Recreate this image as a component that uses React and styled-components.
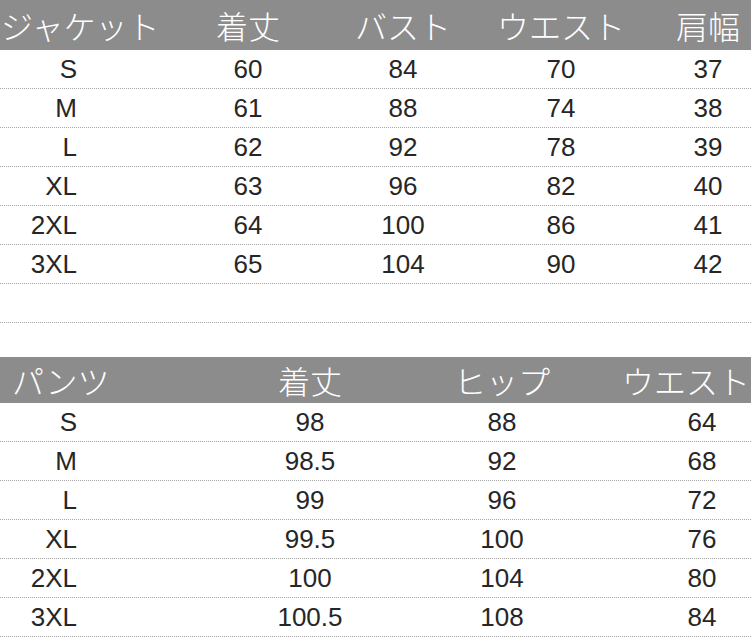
import React from 'react';
import styled, { createGlobalStyle } from 'styled-components';

const GlobalStyle = createGlobalStyle`
  html, body {
    margin: 0;
    padding: 0;
    background: #ffffff;
  }
  body {
    width: 751px;
    overflow: hidden;
  }
`;

const Page = styled.div`
  width: 751px;
  display: flex;
  flex-direction: column;
`;

const Table = styled.section`
  display: flex;
  flex-direction: column;
  margin-bottom: ${(p) => p.$gap || 0}px;
`;

const HeaderRow = styled.div`
  display: grid;
  grid-template-columns: ${(p) => p.$cols};
  height: ${(p) => p.$height}px;
  background: #8c8c8c;
  color: #ffffff;
  font-family: 'Noto Sans CJK JP', 'Noto Sans', sans-serif;
  font-weight: 300;
  font-size: 32px;
`;

const Row = styled.div`
  display: grid;
  grid-template-columns: ${(p) => p.$cols};
  height: 38px;
  border-bottom: 1px dotted #a6a6a6;
  color: #262626;
  font-family: 'Liberation Sans', Arial, sans-serif;
  font-size: 26px;
`;

const Cell = styled.div`
  display: flex;
  align-items: center;
  justify-content: ${(p) => p.$justify || 'center'};
  padding: 0 ${(p) => p.$padRight || 0}px 0 ${(p) => p.$padLeft || 0}px;
  white-space: nowrap;
  line-height: 1;
  min-width: 0;
`;

// size labels line up on their right edge at x = 77
const SIZE_END = 77;

const jacket = {
  cols: '140px 216px 94px 222px 72px',
  first: 140,
  head: ['ジャケット', '着丈', 'バスト', 'ウエスト', '肩幅'],
  rows: [
    ['S', '60', '84', '70', '37'],
    ['M', '61', '88', '74', '38'],
    ['L', '62', '92', '78', '39'],
    ['XL', '63', '96', '82', '40'],
    ['2XL', '64', '100', '86', '41'],
    ['3XL', '65', '104', '90', '42'],
  ],
};

const pants = {
  cols: '270px 80px 304px 96px',
  first: 270,
  head: ['パンツ', '着丈', 'ヒップ', 'ウエスト'],
  rows: [
    ['S', '98', '88', '64'],
    ['M', '98.5', '92', '68'],
    ['L', '99', '96', '72'],
    ['XL', '99.5', '100', '76'],
    ['2XL', '100', '104', '80'],
    ['3XL', '100.5', '108', '84'],
  ],
};

const SizeTable = ({ data, headHeight, titlePad, lastHeadEnd, extraRow, gap }) => (
  <Table $gap={gap}>
    <HeaderRow $cols={data.cols} $height={headHeight}>
      {data.head.map((h, i) => {
        if (i === 0) {
          return (
            <Cell key={h} $justify="flex-start" $padLeft={titlePad}>
              {h}
            </Cell>
          );
        }
        const isLast = i === data.head.length - 1;
        return (
          <Cell key={h} $justify={isLast && lastHeadEnd ? 'flex-end' : 'center'}>
            {h}
          </Cell>
        );
      })}
    </HeaderRow>
    {data.rows.map((r) => (
      <Row key={r[0]} $cols={data.cols}>
        {r.map((v, i) =>
          i === 0 ? (
            <Cell key={i} $justify="flex-end" $padRight={data.first - SIZE_END}>
              {v}
            </Cell>
          ) : (
            <Cell key={i}>{v}</Cell>
          )
        )}
      </Row>
    ))}
    {extraRow && <Row $cols={data.cols} />}
  </Table>
);

export default function App() {
  return (
    <Page>
      <GlobalStyle />
      <SizeTable data={jacket} headHeight={50} titlePad={1} extraRow gap={34} />
      <SizeTable data={pants} headHeight={46} titlePad={12} lastHeadEnd />
    </Page>
  );
}
